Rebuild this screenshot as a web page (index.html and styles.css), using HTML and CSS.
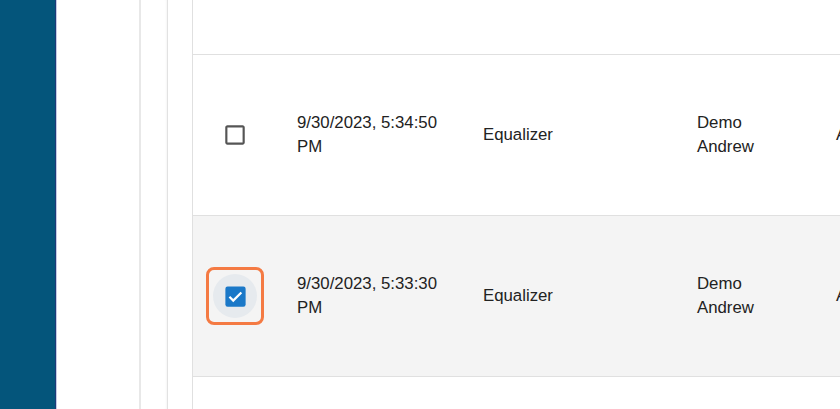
FILE: index.html
```html
<!DOCTYPE html>
<html lang="en">
<head>
    <meta charset="UTF-8">
    <meta name="viewport" content="width=device-width, initial-scale=1.0">
    <title>Sessions</title>
    <link rel="stylesheet" href="styles.css">
</head>
<body>
    <div class="app">
        <aside class="sidebar"></aside>
        <div class="drawer"></div>
        <div class="subdrawer"></div>
        <main class="content">
            <div class="table">
                <div class="row row-tail"></div>
                <div class="row">
                    <div class="cell cell-check">
                        <span class="cb-focus">
                            <span class="cb-ripple">
                                <svg class="cb-icon" viewBox="0 0 24 24" width="26" height="26">
                                    <path d="M19 5v14H5V5h14m0-2H5c-1.1 0-2 .9-2 2v14c0 1.1.9 2 2 2h14c1.1 0 2-.9 2-2V5c0-1.1-.9-2-2-2z" fill="#555"/>
                                </svg>
                            </span>
                        </span>
                    </div>
                    <div class="cell">9/30/2023, 5:34:50 PM</div>
                    <div class="cell">Equalizer</div>
                    <div class="cell cell-user">Demo Andrew</div>
                    <div class="cell">Active</div>
                </div>
                <div class="row selected">
                    <div class="cell cell-check">
                        <span class="cb-focus focused">
                            <span class="cb-ripple hover">
                                <svg class="cb-icon" viewBox="0 0 24 24" width="27" height="27">
                                    <rect x="3" y="3" width="18" height="18" rx="2" fill="#1a78c8"/>
                                    <path d="M6.6 12.2l3.4 3.4 7.2-7.2" fill="none" stroke="#fff" stroke-width="2"/>
                                </svg>
                            </span>
                        </span>
                    </div>
                    <div class="cell">9/30/2023, 5:33:30 PM</div>
                    <div class="cell">Equalizer</div>
                    <div class="cell cell-user">Demo Andrew</div>
                    <div class="cell">Active</div>
                </div>
                <div class="row"></div>
            </div>
        </main>
    </div>
</body>
</html>
```

FILE: styles.css
```css
html, body {
    margin: 0;
    height: 100%;
    overflow: hidden;
}
body {
    font-family: "Liberation Sans", Arial, sans-serif;
    background-color: #fff;
}
.app {
    display: flex;
    height: 100%;
}
.sidebar {
    width: 55px;
    flex-shrink: 0;
    background-color: #04557b;
    border-right: 1px solid #1e3a78;
}
.drawer {
    width: 82px;
    flex-shrink: 0;
    border-left: 1px solid #c4cde6;
    border-right: 2px solid #e8e8e8;
}
.subdrawer {
    width: 26px;
    flex-shrink: 0;
    border-right: 1px solid #e2e2e2;
    box-shadow: -2px 0 3px -2px rgba(0, 0, 0, 0.08) inset;
}
.content {
    flex: 1;
    padding-left: 24px;
    overflow: hidden;
}
.table {
    border-left: 1px solid #e0e0e0;
    height: 100%;
}
.row {
    display: grid;
    grid-template-columns: 88px 186px 214px 139px 1fr;
    align-items: center;
    height: 161px;
    box-sizing: border-box;
    border-bottom: 1px solid #e0e0e0;
    color: #222;
    font-size: 16.8px;
    line-height: 24px;
}
.row-tail {
    height: 55px;
}
.row.selected {
    background-color: #f4f4f4;
}
.cell {
    padding: 0 16px;
    white-space: normal;
}
.cell-check {
    padding: 0 0 0 13px;
    display: flex;
}
.cell-user {
    padding-right: 36px;
}
.cb-focus {
    display: inline-flex;
    padding: 4px;
    border: 3px solid transparent;
    border-radius: 8px;
}
.cb-focus.focused {
    border-color: #f47a43;
}
.cb-ripple {
    width: 44px;
    height: 44px;
    border-radius: 50%;
    display: flex;
    align-items: center;
    justify-content: center;
}
.cb-ripple.hover {
    background-color: #e6eaee;
}
.cb-icon {
    display: block;
}
```
